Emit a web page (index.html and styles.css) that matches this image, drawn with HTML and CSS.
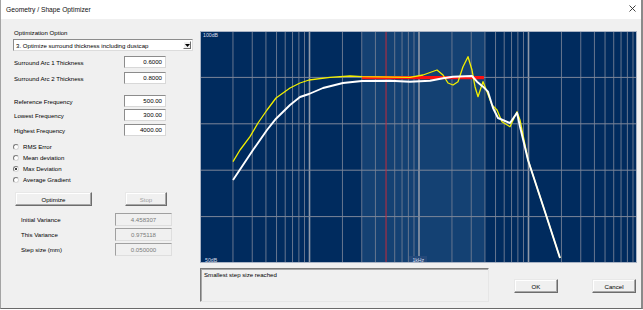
FILE: index.html
```html
<!DOCTYPE html>
<html>
<head>
<meta charset="utf-8">
<title>Geometry / Shape Optimizer</title>
<link rel="stylesheet" href="styles.css">
</head>
<body>
<div class="window">
  <div class="titlebar">
    <span class="title">Geometry / Shape Optimizer</span>
    <svg class="close" width="7" height="7" viewBox="0 0 7 7"><path d="M0.5 0.5L6.5 6.5M6.5 0.5L0.5 6.5" stroke="#2b2b2b" stroke-width="0.9" fill="none"/></svg>
  </div>
  <div class="content">
    <div class="left">
      <div class="opt-label">Optimization Option</div>
      <div class="select">
        <span class="select-text">3. Optimize surround thickness including dustcap</span>
        <span class="select-btn"><svg width="5" height="3" viewBox="0 0 5 3"><path d="M0 0H5L2.5 3Z" fill="#000"/></svg></span>
      </div>
      <div class="field f-arc1"><span class="lbl">Surround Arc 1 Thickness</span><span class="input">0.6000</span></div>
      <div class="field f-arc2"><span class="lbl">Surround Arc 2 Thickness</span><span class="input">0.8000</span></div>
      <div class="field f-ref"><span class="lbl">Reference Frequency</span><span class="input">500.00</span></div>
      <div class="field f-low"><span class="lbl">Lowest Frequency</span><span class="input">300.00</span></div>
      <div class="field f-high"><span class="lbl">Highest Frequency</span><span class="input">4000.00</span></div>
      <div class="radios">
        <div class="radio"><span class="dot"></span><span>RMS Error</span></div>
        <div class="radio"><span class="dot"></span><span>Mean deviation</span></div>
        <div class="radio"><span class="dot checked"></span><span>Max Deviation</span></div>
        <div class="radio"><span class="dot"></span><span>Average Gradient</span></div>
      </div>
      <div class="actions">
        <button class="btn btn-opt">Optimize</button>
        <button class="btn btn-stop" disabled>Stop</button>
      </div>
      <div class="vrow v1"><span class="vlbl">Initial Variance</span><span class="vbox">4.458307</span></div>
      <div class="vrow v2"><span class="vlbl">This Variance</span><span class="vbox">0.975118</span></div>
      <div class="vrow v3"><span class="vlbl">Step size (mm)</span><span class="vbox">0.050000</span></div>
    </div>
    <div class="right">
      <svg class="chart" width="437" height="232" viewBox="0 0 437 232">
        <rect x="0" y="0" width="437" height="232" fill="#002b5e"/>
        <rect x="161.75" y="0" width="123.18" height="232" fill="#144173"/>
        <g stroke="#66768f" stroke-width="1">
          <line x1="32.96" y1="0" x2="32.96" y2="232"/>
          <line x1="52.25" y1="0" x2="52.25" y2="232"/>
          <line x1="65.93" y1="0" x2="65.93" y2="232"/>
          <line x1="76.54" y1="0" x2="76.54" y2="232"/>
          <line x1="85.21" y1="0" x2="85.21" y2="232"/>
          <line x1="92.54" y1="0" x2="92.54" y2="232"/>
          <line x1="98.89" y1="0" x2="98.89" y2="232"/>
          <line x1="104.49" y1="0" x2="104.49" y2="232"/>
          <line x1="142.46" y1="0" x2="142.46" y2="232"/>
          <line x1="161.75" y1="0" x2="161.75" y2="232"/>
          <line x1="175.43" y1="0" x2="175.43" y2="232"/>
          <line x1="194.71" y1="0" x2="194.71" y2="232"/>
          <line x1="202.04" y1="0" x2="202.04" y2="232"/>
          <line x1="208.39" y1="0" x2="208.39" y2="232"/>
          <line x1="213.99" y1="0" x2="213.99" y2="232"/>
          <line x1="251.96" y1="0" x2="251.96" y2="232"/>
          <line x1="271.25" y1="0" x2="271.25" y2="232"/>
          <line x1="284.93" y1="0" x2="284.93" y2="232"/>
          <line x1="295.54" y1="0" x2="295.54" y2="232"/>
          <line x1="304.21" y1="0" x2="304.21" y2="232"/>
          <line x1="311.54" y1="0" x2="311.54" y2="232"/>
          <line x1="317.89" y1="0" x2="317.89" y2="232"/>
          <line x1="323.49" y1="0" x2="323.49" y2="232"/>
          <line x1="361.46" y1="0" x2="361.46" y2="232"/>
          <line x1="380.75" y1="0" x2="380.75" y2="232"/>
          <line x1="394.43" y1="0" x2="394.43" y2="232"/>
          <line x1="405.04" y1="0" x2="405.04" y2="232"/>
          <line x1="413.71" y1="0" x2="413.71" y2="232"/>
          <line x1="421.04" y1="0" x2="421.04" y2="232"/>
          <line x1="427.39" y1="0" x2="427.39" y2="232"/>
          <line x1="432.99" y1="0" x2="432.99" y2="232"/>
        </g>
        <g stroke="#9099a8" stroke-width="1.6">
          <line x1="109.5" y1="0" x2="109.5" y2="232"/>
          <line x1="219" y1="0" x2="219" y2="232"/>
          <line x1="328.5" y1="0" x2="328.5" y2="232"/>
        </g>
        <g stroke="#7c8699" stroke-width="1">
          <line x1="0" y1="46.4" x2="437" y2="46.4"/>
          <line x1="0" y1="92.8" x2="437" y2="92.8"/>
          <line x1="0" y1="139.2" x2="437" y2="139.2"/>
          <line x1="0" y1="185.6" x2="437" y2="185.6"/>
        </g>
        <line x1="186.04" y1="0" x2="186.04" y2="232" stroke="#c42a3a" stroke-width="1"/>
        <rect x="162" y="45" width="122" height="3.2" fill="#ff1010"/>
        <path d="M33 130.7 L40 119 L50 105.7 L58 92 L67 79 L76 67 L90 57 L100 52 L109 49 L130 46.3 L150 45 L162 45.7 L210 46.3 L223 44 L237 39 L243 44 L248 52 L253 54 L258 50.7 L263 35.7 L268 25.7 L272 39 L275 55.7 L278 65.7 L283 50.7 L287 60.7 L292 74 L297 79 L302 90.7 L310 95.7 L317 80.7 L320 89 L328 129 L347 187 L360 227" fill="none" stroke="#f2ef00" stroke-width="1.3" stroke-linejoin="round"/>
        <path d="M33 149 L43 134 L53 119 L67 99 L76 87.7 L90 74 L100 66 L109 63 L123 57 L143 52 L162 50 L190 49.7 L210 50.7 L230 49.7 L243 47.3 L253 45.7 L272 45 L277 50.7 L283 55.7 L288 60.7 L293 77 L298 87 L310 92 L317 81.7 L320 95.7 L328 129 L347 187 L360 227" fill="none" stroke="#ffffff" stroke-width="1.9" stroke-linejoin="round"/>
        <rect x="209" y="225" width="18" height="7" fill="#24497a"/>
        <text x="3" y="6" class="axis">100dB</text>
        <text x="5" y="230.5" class="axis">50dB</text>
        <text x="218.3" y="230.5" class="axis" text-anchor="middle">1kHz</text>
        <rect x="0.5" y="0.5" width="436" height="231" fill="none" stroke="#a9b3c4" stroke-width="1"/>
      </svg>
      <div class="bottom">
        <div class="status">Smallest step size reached</div>
        <button class="btn btn-ok">OK</button>
        <button class="btn btn-cancel">Cancel</button>
      </div>
    </div>
  </div>
</div>
</body>
</html>
```

FILE: styles.css
```css
html, body {
  margin: 0;
  padding: 0;
  background: #ffffff;
}
body {
  font-family: "Liberation Sans", Arial, sans-serif;
  font-size: 6.1px;
  color: #000;
}
.window {
  width: 643px;
  height: 309px;
  box-sizing: border-box;
  border-left: 1px solid #a4a4a4;
  border-right: 2px solid #8a8a8a;
  border-bottom: 1px solid #6a6a6a;
  display: flex;
  flex-direction: column;
  background: #f0f0f0;
}
.titlebar {
  height: 19px;
  flex: none;
  background: #ffffff;
  display: flex;
  align-items: center;
  justify-content: space-between;
  padding: 0 5px 1px 5px;
  box-sizing: border-box;
}
.title {
  font-size: 6.7px;
  color: #111;
}
.close {
  display: block;
  margin-top: -2px;
}
.content {
  flex: 1;
  display: flex;
}
.left {
  width: 199px;
  flex: none;
  box-sizing: border-box;
  padding: 8px 0 0 12px;
  display: flex;
  flex-direction: column;
}
.opt-label {
  height: 12px;
  line-height: 12px;
  padding-left: 1px;
}
.select {
  width: 180px;
  height: 12px;
  box-sizing: border-box;
  background: #fff;
  border: 1px solid;
  border-color: #8c8c8c #dcdcdc #dcdcdc #8c8c8c;
  display: flex;
  align-items: center;
  justify-content: space-between;
  padding: 0 1px 0 2px;
}
.select-btn {
  width: 8px;
  height: 8px;
  box-sizing: border-box;
  background: #f0f0f0;
  border: 1px solid;
  border-color: #ffffff #6d6d6d #6d6d6d #ffffff;
  display: flex;
  align-items: center;
  justify-content: center;
}
.select-btn svg { display: block; }
.field {
  display: grid;
  grid-template-columns: 110px 42px;
  height: 12px;
  align-items: center;
  padding-left: 1px;
}
.f-arc1 { margin-top: 5px; }
.f-arc2 { margin-top: 4px; }
.f-ref { margin-top: 11px; }
.f-low { margin-top: 2px; }
.f-high { margin-top: 3px; }
.input {
  height: 12px;
  box-sizing: border-box;
  background: #fff;
  border: 1px solid;
  border-color: #8c8c8c #d8d8d8 #d8d8d8 #8c8c8c;
  text-align: right;
  padding-right: 3px;
  line-height: 10px;
}
.radios {
  margin-top: 5px;
  display: flex;
  flex-direction: column;
}
.radio {
  height: 11px;
  display: flex;
  align-items: center;
  gap: 4px;
}
.dot {
  width: 6px;
  height: 6px;
  box-sizing: border-box;
  border-radius: 50%;
  border: 1px solid;
  border-color: #7a7a7a #d8d8d8 #d8d8d8 #7a7a7a;
  background: #fff;
  display: flex;
  align-items: center;
  justify-content: center;
}
.dot.checked::after {
  content: "";
  width: 2px;
  height: 2px;
  border-radius: 50%;
  background: #000;
}
.actions {
  margin-top: 7px;
  display: flex;
  padding-left: 2px;
  gap: 33px;
}
.btn {
  font-family: inherit;
  font-size: 6.1px;
  color: #000;
  background: #f0f0f0;
  box-sizing: border-box;
  border: 1px solid;
  border-color: #e8e8e8 #6d6d6d #6d6d6d #e8e8e8;
  box-shadow: inset -1px -1px 0 #a8a8a8, inset 1px 1px 0 #ffffff;
  padding: 0;
  height: 14px;
  margin: 0;
}
.btn-opt { width: 77px; }
.btn-stop { width: 42px; color: #a0a0a0; }
.vrow {
  display: grid;
  grid-template-columns: 94px 57px;
  height: 13px;
  align-items: center;
  padding-left: 8px;
}
.v1 { margin-top: 7px; }
.v2, .v3 { margin-top: 2px; }
.vbox {
  height: 13px;
  box-sizing: border-box;
  border: 1px solid;
  border-color: #a0a0a0 #dedede #dedede #a0a0a0;
  background: #f0f0f0;
  color: #7a7a7a;
  text-align: center;
  line-height: 11px;
}
.right {
  flex: 1;
  padding-top: 12px;
  display: flex;
  flex-direction: column;
}
.chart { display: block; }
.axis {
  font-family: "Liberation Sans", Arial, sans-serif;
  font-size: 5.2px;
  fill: #d8deea;
}
.bottom {
  margin-top: 5px;
  display: flex;
  align-items: flex-start;
}
.status {
  width: 289px;
  height: 34px;
  box-sizing: border-box;
  border: 1px solid;
  border-color: #7a7a7a #e6e6e6 #e6e6e6 #7a7a7a;
  box-shadow: inset 1px 1px 0 #a8a8a8;
  background: #f0f0f0;
  padding: 2px 0 0 3px;
  line-height: 8px;
}
.btn-ok {
  width: 44px;
  margin-top: 11px;
  margin-left: 25px;
}
.btn-cancel {
  width: 44px;
  margin-top: 11px;
  margin-left: 34px;
}
```
